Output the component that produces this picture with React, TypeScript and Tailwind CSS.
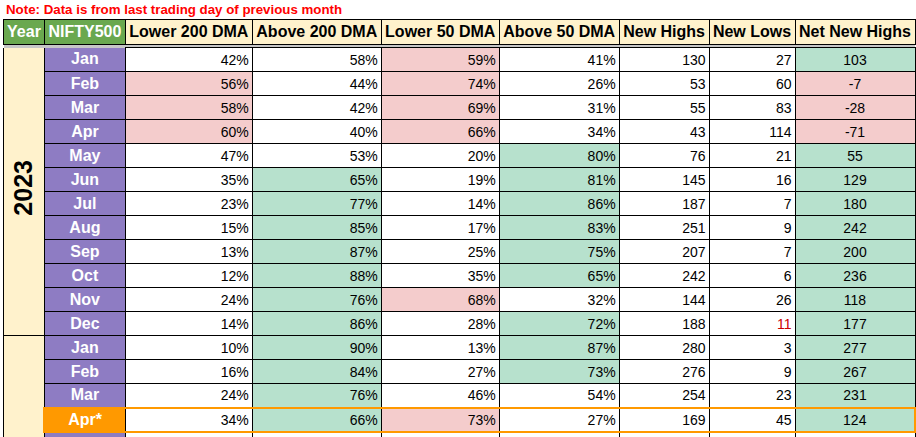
import React from "react";

type Row = {
  m: string;
  v: (string | number)[];
  hl?: string[];
};

const PINK = "bg-[#f4cccc]";
const GREEN = "bg-[#b7e1cd]";

// p = pink, g = green, r = red text, "" = plain
const y2023: Row[] = [
  { m: "Jan", v: ["42%", "58%", "59%", "41%", 130, 27, 103], hl: ["", "", "p", "", "", "", "g"] },
  { m: "Feb", v: ["56%", "44%", "74%", "26%", 53, 60, -7], hl: ["p", "", "p", "", "", "", "p"] },
  { m: "Mar", v: ["58%", "42%", "69%", "31%", 55, 83, -28], hl: ["p", "", "p", "", "", "", "p"] },
  { m: "Apr", v: ["60%", "40%", "66%", "34%", 43, 114, -71], hl: ["p", "", "p", "", "", "", "p"] },
  { m: "May", v: ["47%", "53%", "20%", "80%", 76, 21, 55], hl: ["", "", "", "g", "", "", "g"] },
  { m: "Jun", v: ["35%", "65%", "19%", "81%", 145, 16, 129], hl: ["", "g", "", "g", "", "", "g"] },
  { m: "Jul", v: ["23%", "77%", "14%", "86%", 187, 7, 180], hl: ["", "g", "", "g", "", "", "g"] },
  { m: "Aug", v: ["15%", "85%", "17%", "83%", 251, 9, 242], hl: ["", "g", "", "g", "", "", "g"] },
  { m: "Sep", v: ["13%", "87%", "25%", "75%", 207, 7, 200], hl: ["", "g", "", "g", "", "", "g"] },
  { m: "Oct", v: ["12%", "88%", "35%", "65%", 242, 6, 236], hl: ["", "g", "", "g", "", "", "g"] },
  { m: "Nov", v: ["24%", "76%", "68%", "32%", 144, 26, 118], hl: ["", "g", "p", "", "", "", "g"] },
  { m: "Dec", v: ["14%", "86%", "28%", "72%", 188, 11, 177], hl: ["", "g", "", "g", "", "r", "g"] },
];

const y2024: Row[] = [
  { m: "Jan", v: ["10%", "90%", "13%", "87%", 280, 3, 277], hl: ["", "g", "", "g", "", "", "g"] },
  { m: "Feb", v: ["16%", "84%", "27%", "73%", 276, 9, 267], hl: ["", "g", "", "g", "", "", "g"] },
  { m: "Mar", v: ["24%", "76%", "46%", "54%", 254, 23, 231], hl: ["", "g", "", "", "", "", "g"] },
  { m: "Apr*", v: ["34%", "66%", "73%", "27%", 169, 45, 124], hl: ["", "g", "p", "", "", "", "g"] },
];

const headers = ["Lower 200 DMA", "Above 200 DMA", "Lower 50 DMA", "Above 50 DMA", "New Highs", "New Lows", "Net New Highs"];

function DataCells({ row, current }: { row: Row; current?: boolean }) {
  return (
    <>
      {row.v.map((val, i) => {
        const h = row.hl?.[i];
        const last = i === row.v.length - 1;
        return (
          <td
            key={i}
            className={`border border-black h-[24px] p-0 text-[14px] leading-none ${
              last ? "text-center" : "text-right pr-[3px]"
            } ${h === "p" ? PINK : h === "g" ? GREEN : "bg-white"} ${h === "r" ? "text-[#cc0000]" : "text-black"} ${
              current ? "border-y-2 border-y-[#ff9900]" : ""
            } ${current && last ? "border-r-2 border-r-[#ff9900]" : ""}`}
          >
            {val}
          </td>
        );
      })}
    </>
  );
}

function MonthCell({ m, current, first }: { m: string; current?: boolean; first?: boolean }) {
  return (
    <td
      className={`p-0 h-[24px] text-center text-white font-bold text-[16px] leading-none ${
        current
          ? "bg-[#ff9900] border-y-2 border-l-2 border-y-[#ff9900] border-l-[#ff9900] border-r border-r-black"
          : "bg-[#8e7cc3] border border-black"
      } ${first ? "border-t-0" : ""}`}
    >
      {m}
    </td>
  );
}

export default function App() {
  return (
    <div className="h-[437px] w-[916px] overflow-hidden bg-white font-['Liberation_Sans',Arial,sans-serif]">
      <p className="h-[19px] pl-[6px] pt-[1px] text-[13.3px] font-bold leading-[17px] text-[#ff0000]">
        Note: Data is from last trading day of previous month
      </p>
      <table className="ml-[3px] table-fixed border-collapse">
        <colgroup>
          <col className="w-[41px]" />
          <col className="w-[81px]" />
          <col className="w-[127px]" />
          <col className="w-[129px]" />
          <col className="w-[118px]" />
          <col className="w-[120px]" />
          <col className="w-[90px]" />
          <col className="w-[86px]" />
          <col className="w-[120px]" />
        </colgroup>
        <thead>
          <tr>
            <th className="border border-black h-[24px] p-0 bg-[#6aa84f] text-white text-[16px] font-bold">Year</th>
            <th className="border border-black h-[24px] p-0 bg-[#6aa84f] text-white text-[16px] font-bold">NIFTY500</th>
            {headers.map((h) => (
              <th key={h} className="border border-black h-[24px] p-0 bg-[#fff2cc] text-black text-[16px] font-bold whitespace-nowrap">
                {h}
              </th>
            ))}
          </tr>
          <tr>
            <td colSpan={9} className="h-[3px] p-0 bg-[#c6c6c6]" />
          </tr>
        </thead>
        <tbody>
          {y2023.map((row, i) => (
            <tr key={"a" + row.m}>
              {i === 0 && (
                <td rowSpan={12} className="border border-black border-t-0 bg-[#fff2cc] p-0 text-center align-middle">
                  <span className="inline-block rotate-180 text-[25px] font-bold leading-none text-black [writing-mode:vertical-rl]">
                    2023
                  </span>
                </td>
              )}
              <MonthCell m={row.m} first={i === 0} />
              <DataCells row={row} />
            </tr>
          ))}
          {y2024.map((row, i) => (
            <tr key={"b" + row.m}>
              {i === 0 && <td rowSpan={5} className="border border-black bg-[#fff2cc] p-0" />}
              <MonthCell m={row.m} current={row.m === "Apr*"} />
              <DataCells row={row} current={row.m === "Apr*"} />
            </tr>
          ))}
          <tr>
            <MonthCell m="" />
            <DataCells row={{ m: "", v: ["", "", "", "", "", "", ""] }} />
          </tr>
        </tbody>
      </table>
    </div>
  );
}
